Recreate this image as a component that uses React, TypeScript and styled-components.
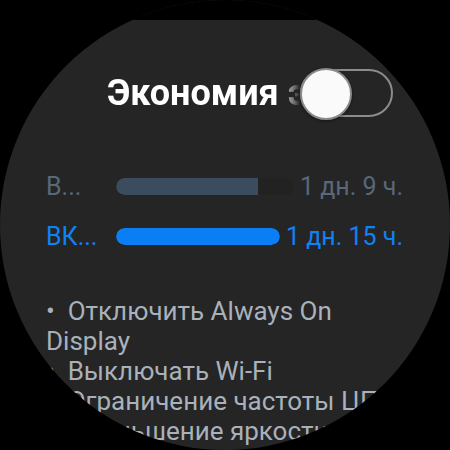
import React from "react";
import styled, { createGlobalStyle } from "styled-components";

const Global = createGlobalStyle`
  html, body {
    margin: 0;
    padding: 0;
    background: #000;
  }
  body {
    font-family: Roboto, "Noto Sans", "Liberation Sans", sans-serif;
  }
`;

const Screen = styled.div`
  width: 450px;
  height: 450px;
  background: #000;
`;

const Dial = styled.div`
  width: 450px;
  height: 450px;
  border-radius: 50%;
  overflow: hidden;
  background: #252525;
  display: flex;
  flex-direction: column;
`;

const StatusBar = styled.div`
  height: 20px;
  flex: none;
  background: #000;
`;

const Header = styled.div`
  margin-top: 48px;
  height: 50px;
  display: flex;
  align-items: center;
  padding: 0 57px 0 107px;
`;

const Title = styled.div`
  flex: 1;
  min-width: 0;
  overflow: hidden;
  white-space: nowrap;
  color: #fff;
  font-size: 36px;
  font-weight: 700;
  line-height: 50px;
  -webkit-mask-image: linear-gradient(to right, #000 calc(100% - 22px), rgba(0, 0, 0, 0.35) calc(100% - 6px), transparent);
  mask-image: linear-gradient(to right, #000 calc(100% - 22px), rgba(0, 0, 0, 0.35) calc(100% - 6px), transparent);
`;

const Track = styled.div`
  position: relative;
  flex: none;
  width: 93px;
  height: 48px;
  box-sizing: border-box;
  border: 2px solid #8c8c8c;
  border-radius: 24px;
`;

const Thumb = styled.div`
  position: absolute;
  left: -2px;
  top: -3px;
  width: 52px;
  height: 52px;
  box-sizing: border-box;
  border-radius: 50%;
  background: #fafafa;
  border: 2px solid #8a8a8a;
  box-shadow: 0 1px 3px rgba(0, 0, 0, 0.5);
`;

const Usage = styled.div`
  margin-top: 48px;
  display: flex;
  flex-direction: column;
  gap: 10px;
  padding: 0 47px 0 46px;
`;

const Row = styled.div<{ $tone: string }>`
  height: 40px;
  display: flex;
  align-items: center;
  gap: 6px;
  color: ${(p) => p.$tone};
  font-size: 25px;
  white-space: nowrap;
`;

const Label = styled.div`
  width: 64px;
  flex: none;
`;

const Bar = styled.div`
  flex: 1;
  height: 17px;
  border-radius: 9px;
  background: #222;
  overflow: hidden;
`;

const Fill = styled.div<{ $color: string; $full: boolean }>`
  height: 100%;
  background: ${(p) => p.$color};
  border-radius: ${(p) => (p.$full ? "9px" : "9px 0 0 9px")};
`;

const Time = styled.div`
  flex: none;
`;

const Tips = styled.div`
  margin-top: 40px;
  padding: 0 47px 0 46px;
  color: #a9b1bb;
  font-size: 26px;
  line-height: 30px;
`;

const Tip = styled.div`
  white-space: pre-wrap;
`;

const usage = [
  { label: "В...", time: "1 дн. 9 ч.", tone: "#586879", fill: "#3c4c5f", pct: 80 },
  { label: "ВК...", time: "1 дн. 15 ч.", tone: "#0f82f5", fill: "#0a7ff5", pct: 100 },
];

const tips = [
  "Отключить Always On Display",
  "Выключать Wi-Fi",
  "Ограничение частоты ЦП",
  "Уменьшение яркости экрана",
];

export default function App() {
  return (
    <Screen>
      <Global />
      <Dial>
        <StatusBar />
        <Header>
          <Title>Экономия энергии</Title>
          <Track>
            <Thumb />
          </Track>
        </Header>
        <Usage>
          {usage.map((u) => (
            <Row key={u.label} $tone={u.tone}>
              <Label>{u.label}</Label>
              <Bar>
                <Fill $color={u.fill} $full={u.pct >= 100} style={{ width: `${u.pct}%` }} />
              </Bar>
              <Time>{u.time}</Time>
            </Row>
          ))}
        </Usage>
        <Tips>
          {tips.map((t) => (
            <Tip key={t}>{"•  " + t}</Tip>
          ))}
        </Tips>
      </Dial>
    </Screen>
  );
}
